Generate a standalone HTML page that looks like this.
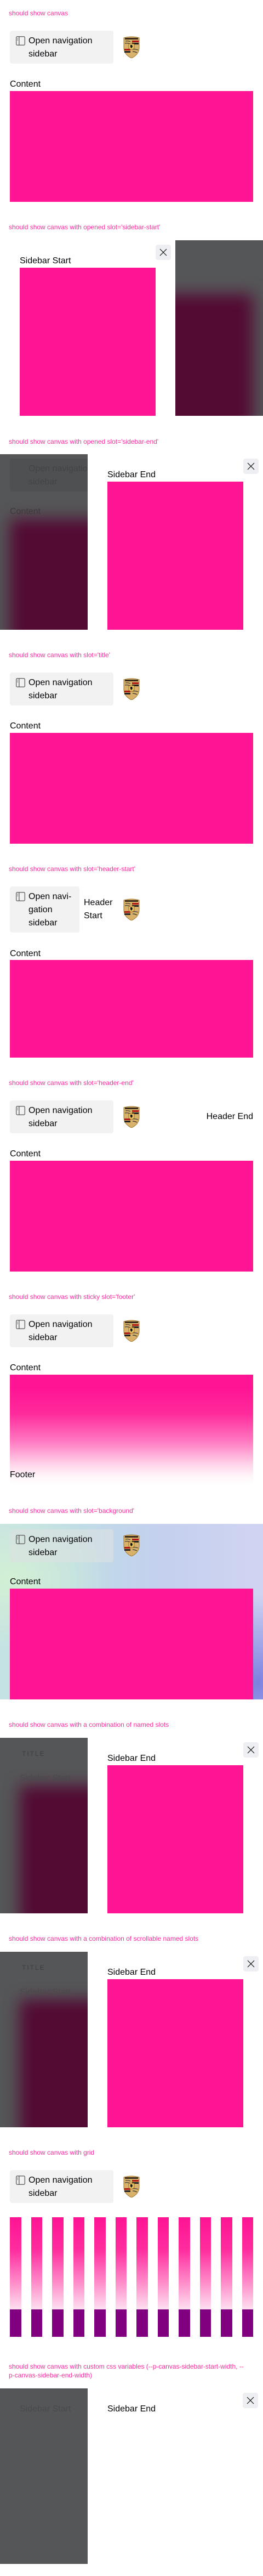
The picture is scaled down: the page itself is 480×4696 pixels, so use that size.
<!DOCTYPE html>
<html><head><meta charset="utf-8">
<style>
*{margin:0;padding:0;box-sizing:border-box}
html,body{width:480px;height:4696px;background:#fff;overflow:hidden;position:relative}
body{font-family:"Liberation Sans",sans-serif;color:#010205}
.t{position:absolute;left:16px;font-size:12px;line-height:16px;color:#ff2a9e;white-space:nowrap}
.btn{position:absolute;left:18px;width:189px;height:60px;background:#f2f2f2;border-radius:4px;font-size:16px;line-height:24px;padding:7px 0 0 34px}
.btn svg{position:absolute;left:11px;top:10px}
.logo{position:absolute;left:225px}
.lbl{position:absolute;left:18px;font-size:16px;line-height:20px}
.pink{position:absolute;background:#ff1493}
.scrim{position:absolute;background:#555658;overflow:hidden}
.scrim .in{position:absolute;background:#530a33;filter:blur(14px)}
.close{position:absolute;width:28px;height:28px;background:#eeeff2;border-radius:4px}
.close svg{position:absolute;left:7px;top:7px}
.tx{position:absolute;font-size:16px;line-height:20px}
.bar{position:absolute;width:20.5px}
</style></head><body>

<!-- reusable symbol definitions -->
<svg width="0" height="0" style="position:absolute">
<defs>
<symbol id="ic" viewBox="0 0 18 18"><rect x="0.75" y="0.75" width="16.5" height="16.5" rx="2" fill="none" stroke="#555" stroke-width="1.3"/><line x1="6.2" y1="1" x2="6.2" y2="17" stroke="#555" stroke-width="1.3"/><rect x="2.8" y="3.5" width="1.4" height="1" fill="#555"/><rect x="2.8" y="5.5" width="1.4" height="1" fill="#555"/><rect x="2.8" y="7.5" width="1.4" height="1" fill="#555"/></symbol>
<symbol id="crest" viewBox="0 0 30 40"><path d="M1 3 Q15 -1 29 3 L29 22 Q28 34 15 40 Q2 34 1 22 Z" fill="#d8b26a" stroke="#a07830" stroke-width="1"/><rect x="3" y="3" width="24" height="3" fill="#3a2a1a"/><rect x="16" y="8" width="12" height="3" fill="#b01818"/><rect x="16" y="12" width="12" height="3" fill="#222"/><rect x="2" y="23" width="11" height="3" fill="#b01818"/><rect x="2" y="27" width="11" height="3" fill="#222"/><path d="M4 9 Q9 8 13 10 M3 13 Q8 12 13 14 M17 24 Q22 23 27 25 M17 28 Q21 28 25 30" stroke="#333" stroke-width="1.2" fill="none"/><path d="M10 14 H20 V22 Q15 27 10 22 Z" fill="#e8c060" stroke="#8a6020" stroke-width=".8"/><path d="M13 16 L16 16 L17 19 L15 22 L13 20 Z" fill="#111"/></symbol>
<symbol id="x" viewBox="0 0 14 14"><path d="M1 1 L13 13 M13 1 L1 13" stroke="#111" stroke-width="1.2" fill="none"/></symbol>
</defs></svg>

<!-- S1 -->
<div class="t" style="top:16px">should show canvas</div>
<div class="btn" style="top:56px"><svg width="17" height="17"><use href="#ic"/></svg>Open navigation<br>sidebar</div>
<svg class="logo" style="top:66px" width="30" height="40"><use href="#crest"/></svg>
<div class="lbl" style="top:144px">Content</div>
<div class="pink" style="left:18px;top:166px;width:444px;height:202px"></div>

<!-- S2 -->
<div class="t" style="top:406px">should show canvas with opened slot='sidebar-start'</div>
<div class="close" style="left:284px;top:446px"><svg width="14" height="14"><use href="#x"/></svg></div>
<div class="tx" style="left:36px;top:466px">Sidebar Start</div>
<div class="pink" style="left:36px;top:488px;width:248px;height:270px"></div>
<div class="scrim" style="left:320px;top:438px;width:160px;height:320px"><div class="in" style="left:-40px;top:98px;width:182px;height:260px"></div></div>

<!-- S3 -->
<div class="t" style="top:797px">should show canvas with opened slot='sidebar-end'</div>
<div class="scrim" style="left:0;top:828px;width:160px;height:320px"><div class="in" style="left:18px;top:118px;width:180px;height:240px"></div><div style="position:absolute;left:18px;top:8px;width:170px;height:60px;background:#4f5052;border-radius:4px"></div><div style="position:absolute;left:52px;top:15px;font-size:16px;line-height:24px;color:#444;white-space:nowrap">Open navigation<br>sidebar</div><div style="position:absolute;left:18px;top:96px;font-size:16px;color:#3a3a3a">Content</div></div>
<div class="close" style="left:444px;top:836px"><svg width="14" height="14"><use href="#x"/></svg></div>
<div class="tx" style="left:196px;top:856px">Sidebar End</div>
<div class="pink" style="left:196px;top:878px;width:248px;height:270px"></div>

<!-- S4 -->
<div class="t" style="top:1186px">should show canvas with slot='title'</div>
<div class="btn" style="top:1226px"><svg width="17" height="17"><use href="#ic"/></svg>Open navigation<br>sidebar</div>
<svg class="logo" style="top:1236px" width="30" height="40"><use href="#crest"/></svg>
<div class="lbl" style="top:1314px">Content</div>
<div class="pink" style="left:18px;top:1336px;width:444px;height:202px"></div>

<!-- S5 -->
<div class="t" style="top:1576px">should show canvas with slot='header-start'</div>
<div class="btn" style="top:1616px;width:127px;height:84px"><svg width="17" height="17"><use href="#ic"/></svg>Open navi-<br>gation<br>sidebar</div>
<div class="tx" style="left:153px;top:1634px;line-height:24px">Header<br>Start</div>
<svg class="logo" style="top:1638px" width="30" height="40"><use href="#crest"/></svg>
<div class="lbl" style="top:1729px">Content</div>
<div class="pink" style="left:18px;top:1750px;width:444px;height:178px"></div>

<!-- S6 -->
<div class="t" style="top:1966px">should show canvas with slot='header-end'</div>
<div class="btn" style="top:2006px"><svg width="17" height="17"><use href="#ic"/></svg>Open navigation<br>sidebar</div>
<svg class="logo" style="top:2016px" width="30" height="40"><use href="#crest"/></svg>
<div class="tx" style="right:18px;top:2026px">Header End</div>
<div class="lbl" style="top:2094px">Content</div>
<div class="pink" style="left:18px;top:2116px;width:444px;height:202px"></div>

<!-- S7 -->
<div class="t" style="top:2356px">should show canvas with sticky slot='footer'</div>
<div class="btn" style="top:2396px"><svg width="17" height="17"><use href="#ic"/></svg>Open navigation<br>sidebar</div>
<svg class="logo" style="top:2406px" width="30" height="40"><use href="#crest"/></svg>
<div class="lbl" style="top:2484px">Content</div>
<div class="pink" style="left:18px;top:2506px;width:444px;height:202px;background:linear-gradient(#ff1493 0%,#ff1493 12%,#ff2a9c 35%,#ff79c1 60%,#ffd0e8 80%,#fff6fa 92%,#fff 100%)"></div>
<div class="lbl" style="top:2679px">Footer</div>

<!-- S8 -->
<div class="t" style="top:2746px">should show canvas with slot='background'</div>
<div style="position:absolute;left:0;top:2778px;width:480px;height:320px;background:radial-gradient(ellipse 120px 160px at 470px 290px,#7c80e0 0%,rgba(124,128,224,0) 100%),radial-gradient(ellipse 180px 140px at 20px 100px,#d2f0d4 0%,rgba(210,240,212,0) 100%),linear-gradient(90deg,#c4e2e4 0%,#c0dce6 30%,#c4d0ee 60%,#d0d4f2 100%)"></div>
<div class="btn" style="top:2788px;background:rgba(220,225,225,.6)"><svg width="17" height="17"><use href="#ic"/></svg>Open navigation<br>sidebar</div>
<svg class="logo" style="top:2797px" width="30" height="40"><use href="#crest"/></svg>
<div class="lbl" style="top:2874px">Content</div>
<div class="pink" style="left:18px;top:2896px;width:444px;height:202px"></div>

<!-- S9 -->
<div class="t" style="top:3136px">should show canvas with a combination of named slots</div>
<div class="scrim" style="left:0;top:3168px;width:160px;height:320px"><div class="in" style="left:36px;top:87px;width:160px;height:260px"></div><div style="position:absolute;left:40px;top:22px;font-size:12px;letter-spacing:2px;color:#3e3e40">TITLE</div><div style="position:absolute;left:36px;top:65px;font-size:16px;color:#4a4a4c">Sidebar Start</div></div>
<div class="close" style="left:444px;top:3176px"><svg width="14" height="14"><use href="#x"/></svg></div>
<div class="tx" style="left:196px;top:3196px">Sidebar End</div>
<div class="pink" style="left:196px;top:3218px;width:248px;height:270px"></div>

<!-- S10 -->
<div class="t" style="top:3526px">should show canvas with a combination of scrollable named slots</div>
<div class="scrim" style="left:0;top:3558px;width:160px;height:320px"><div class="in" style="left:36px;top:87px;width:160px;height:260px"></div><div style="position:absolute;left:40px;top:22px;font-size:12px;letter-spacing:2px;color:#3e3e40">TITLE</div><div style="position:absolute;left:36px;top:65px;font-size:16px;color:#4a4a4c">Sidebar Start</div></div>
<div class="close" style="left:444px;top:3566px"><svg width="14" height="14"><use href="#x"/></svg></div>
<div class="tx" style="left:196px;top:3586px">Sidebar End</div>
<div class="pink" style="left:196px;top:3608px;width:248px;height:270px"></div>

<!-- S11 -->
<div class="t" style="top:3916px">should show canvas with grid</div>
<div class="btn" style="top:3956px"><svg width="17" height="17"><use href="#ic"/></svg>Open navigation<br>sidebar</div>
<svg class="logo" style="top:3966px" width="30" height="40"><use href="#crest"/></svg>
<div id="grid"></div>
<div class="bar" style="left:18px;top:4042px;height:168px;background:linear-gradient(#ff1493,#ff2c9e 35%,#ff7cc2 65%,#fde0f0)"></div>
<div class="bar" style="left:18px;top:4210px;height:50px;background:#800080"></div>
<div class="bar" style="left:56.5px;top:4042px;height:168px;background:linear-gradient(#ff1493,#ff2c9e 35%,#ff7cc2 65%,#fde0f0)"></div>
<div class="bar" style="left:56.5px;top:4210px;height:50px;background:#800080"></div>
<div class="bar" style="left:95px;top:4042px;height:168px;background:linear-gradient(#ff1493,#ff2c9e 35%,#ff7cc2 65%,#fde0f0)"></div>
<div class="bar" style="left:95px;top:4210px;height:50px;background:#800080"></div>
<div class="bar" style="left:133.5px;top:4042px;height:168px;background:linear-gradient(#ff1493,#ff2c9e 35%,#ff7cc2 65%,#fde0f0)"></div>
<div class="bar" style="left:133.5px;top:4210px;height:50px;background:#800080"></div>
<div class="bar" style="left:172px;top:4042px;height:168px;background:linear-gradient(#ff1493,#ff2c9e 35%,#ff7cc2 65%,#fde0f0)"></div>
<div class="bar" style="left:172px;top:4210px;height:50px;background:#800080"></div>
<div class="bar" style="left:210.5px;top:4042px;height:168px;background:linear-gradient(#ff1493,#ff2c9e 35%,#ff7cc2 65%,#fde0f0)"></div>
<div class="bar" style="left:210.5px;top:4210px;height:50px;background:#800080"></div>
<div class="bar" style="left:249px;top:4042px;height:168px;background:linear-gradient(#ff1493,#ff2c9e 35%,#ff7cc2 65%,#fde0f0)"></div>
<div class="bar" style="left:249px;top:4210px;height:50px;background:#800080"></div>
<div class="bar" style="left:287.5px;top:4042px;height:168px;background:linear-gradient(#ff1493,#ff2c9e 35%,#ff7cc2 65%,#fde0f0)"></div>
<div class="bar" style="left:287.5px;top:4210px;height:50px;background:#800080"></div>
<div class="bar" style="left:326px;top:4042px;height:168px;background:linear-gradient(#ff1493,#ff2c9e 35%,#ff7cc2 65%,#fde0f0)"></div>
<div class="bar" style="left:326px;top:4210px;height:50px;background:#800080"></div>
<div class="bar" style="left:364.5px;top:4042px;height:168px;background:linear-gradient(#ff1493,#ff2c9e 35%,#ff7cc2 65%,#fde0f0)"></div>
<div class="bar" style="left:364.5px;top:4210px;height:50px;background:#800080"></div>
<div class="bar" style="left:403px;top:4042px;height:168px;background:linear-gradient(#ff1493,#ff2c9e 35%,#ff7cc2 65%,#fde0f0)"></div>
<div class="bar" style="left:403px;top:4210px;height:50px;background:#800080"></div>
<div class="bar" style="left:441.5px;top:4042px;height:168px;background:linear-gradient(#ff1493,#ff2c9e 35%,#ff7cc2 65%,#fde0f0)"></div>
<div class="bar" style="left:441.5px;top:4210px;height:50px;background:#800080"></div>

<!-- S12 -->
<div class="t" style="top:4306px;white-space:normal;width:430px">should show canvas with custom css variables (--p-canvas-sidebar-start-width, --p-canvas-sidebar-end-width)</div>
<div class="scrim" style="left:0;top:4354px;width:160px;height:320px"><div style="position:absolute;left:36px;top:29px;font-size:16px;color:#4a4a4c">Sidebar Start</div></div>
<div class="close" style="left:443px;top:4362px"><svg width="14" height="14"><use href="#x"/></svg></div>
<div class="tx" style="left:196px;top:4382px">Sidebar End</div>

</body></html>
